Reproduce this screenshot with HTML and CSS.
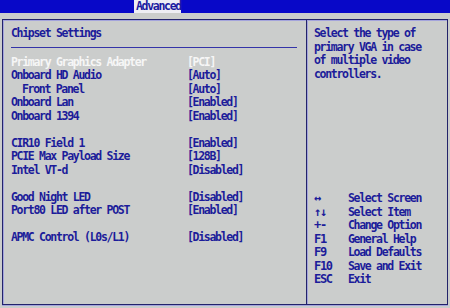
FILE: index.html
```html
<!DOCTYPE html>
<html lang="en">
<head>
  <meta charset="UTF-8" />
  <title>Chipset Settings</title>
  <link rel="stylesheet" href="styles.css">
</head>
<body>
  <div class="topbar">
    <span class="tab">Advanced</span>
  </div>

  <div class="frame">
    <div class="main">
      <div class="title">Chipset Settings</div>
      <div class="rows">
        <div class="row sel"><span class="name">Primary Graphics Adapter</span><span class="val">[PCI]</span></div>
        <div class="row"><span class="name">Onboard HD Audio</span><span class="val">[Auto]</span></div>
        <div class="row"><span class="name sub">Front Panel</span><span class="val">[Auto]</span></div>
        <div class="row"><span class="name">Onboard Lan</span><span class="val">[Enabled]</span></div>
        <div class="row"><span class="name">Onboard 1394</span><span class="val">[Enabled]</span></div>
        <div class="row"></div>
        <div class="row"><span class="name">CIR10 Field 1</span><span class="val">[Enabled]</span></div>
        <div class="row"><span class="name">PCIE Max Payload Size</span><span class="val">[128B]</span></div>
        <div class="row"><span class="name">Intel VT-d</span><span class="val">[Disabled]</span></div>
        <div class="row"></div>
        <div class="row"><span class="name">Good Night LED</span><span class="val">[Disabled]</span></div>
        <div class="row"><span class="name">Port80 LED after POST</span><span class="val">[Enabled]</span></div>
        <div class="row"></div>
        <div class="row"><span class="name">APMC Control (L0s/L1)</span><span class="val">[Disabled]</span></div>
      </div>
    </div>

    <div class="side">
      <div class="help">
        <div>Select the type of</div>
        <div>primary VGA in case</div>
        <div>of multiple video</div>
        <div>controllers.</div>
      </div>
      <div class="keys">
        <div class="key"><span class="k">&#8596;</span><span>Select Screen</span></div>
        <div class="key"><span class="k">&#8593;&#8595;</span><span>Select Item</span></div>
        <div class="key"><span class="k">+-</span><span>Change Option</span></div>
        <div class="key"><span class="k">F1</span><span>General Help</span></div>
        <div class="key"><span class="k">F9</span><span>Load Defaults</span></div>
        <div class="key"><span class="k">F10</span><span>Save and Exit</span></div>
        <div class="key"><span class="k">ESC</span><span>Exit</span></div>
      </div>
    </div>
  </div>
</body>
</html>
```

FILE: styles.css
```css
* {
  box-sizing: border-box;
}
body {
  margin: 0;
  width: 450px;
  height: 308px;
  background: #cbcdcc;
  color: #1c1c9a;
  font-family: "DejaVu Sans Mono", "Liberation Mono", monospace;
  font-weight: bold;
  font-size: 11.5px;
  letter-spacing: -1.3px;
  overflow: hidden;
}
.topbar {
  height: 13px;
  background: #0808c8;
  padding-left: 134px;
  display: flex;
}
.tab {
  background: #eeeef4;
  color: #1a1aa0;
  padding: 0 2px 0 2px;
  line-height: 13px;
  width: 47px;
}
.frame {
  margin: 6px 2px 0 2px;
  height: 286px;
  border: 1px solid #23236a;
  box-shadow: inset 1px 1px 0 #a4a4dc, 0 1px 0 #a4a4dc;
  display: flex;
}
.main {
  width: 304px;
  border-right: 1px solid #23236a;
  padding: 7px 9px 0 8px;
}
.title {
  line-height: 13.5px;
  padding-bottom: 6px;
  border-bottom: 1px solid #3434a8;
}
.rows {
  padding-top: 8px;
}
.row {
  display: flex;
  height: 13.5px;
  line-height: 13.5px;
}
.name {
  width: 176px;
  white-space: pre;
}
.sub {
  padding-left: 11px;
}
.sel {
  color: #f6f6f6;
}
.side {
  flex: 1;
  border-left: 1px solid #a4a4dc;
  padding: 7px 6px 0 6px;
  display: flex;
  flex-direction: column;
}
.help div {
  line-height: 13.5px;
}
.keys {
  margin-top: 111px;
}
.key {
  display: flex;
  line-height: 13.5px;
}
.k {
  width: 34px;
  font-size: 12px;
}
```
